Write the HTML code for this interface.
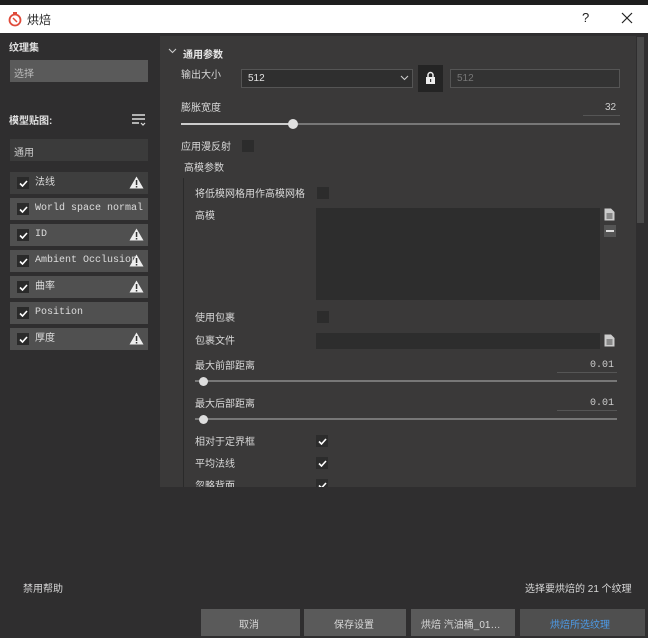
<!DOCTYPE html>
<html><head><meta charset="utf-8"><style>
*{margin:0;padding:0;box-sizing:border-box}
body{width:648px;height:638px;background:#2f2e2f;font-family:"Liberation Sans","Noto Sans CJK SC",sans-serif;font-size:10px;color:#d8d8d8;position:relative;overflow:hidden}
.a{position:absolute}
.t{position:absolute;white-space:nowrap}
.item{position:absolute;left:10px;width:138px;height:22px;background:#505050}
.item .cb{position:absolute;left:7px;top:5px;width:12px;height:12px;background:#2a2a2a}
.item .lbl{position:absolute;left:25px;top:0;line-height:22px;font-size:10px;color:#ddd}
.mono{font-family:"Liberation Mono","Noto Sans CJK SC",monospace}
.warn{position:absolute;right:4px;top:4px}
.box{position:absolute;width:12px;height:12px;background:#2c2c2c}
.ck{position:absolute;width:12px;height:12px;background:#2c2c2c}
</style></head><body>
<div class="a" style="left:0;top:0;width:648px;height:5px;background:#1e1e1e"></div>
<div class="a" style="left:0;top:5px;width:648px;height:28px;background:#fff"></div>
<svg class="a" style="left:7px;top:11px" width="16" height="16" viewBox="0 0 16 16"><circle cx="8" cy="9" r="5.5" fill="none" stroke="#e04a3a" stroke-width="1.8"/><rect x="6" y="1" width="4" height="2" fill="#e04a3a"/><path d="M6 7l4 4" stroke="#e04a3a" stroke-width="1.5"/></svg>
<div class="t" style="left:27px;top:11px;font-size:12px;color:#222">烘焙</div>
<div class="t" style="left:582px;top:10px;font-size:13px;color:#222">?</div>
<svg class="a" style="left:621px;top:12px" width="12" height="12"><path d="M1 1L11 11M11 1L1 11" stroke="#222" stroke-width="1.2"/></svg>

<div class="t" style="left:9px;top:39px;font-weight:bold;color:#e0e0e0">纹理集</div>
<div class="a" style="left:10px;top:60px;width:138px;height:22px;background:#5a5a5a"></div>
<div class="t" style="left:14px;top:65px;color:#bbb">选择</div>
<div class="t" style="left:9px;top:112px;font-weight:bold;color:#e0e0e0">模型贴图:</div>
<svg class="a" style="left:131px;top:113px" width="16" height="14"><path d="M1 2h13M1 6h13M1 10h7" stroke="#ddd" stroke-width="1.5"/><path d="M10 10l2 2 2-2" stroke="#ddd" stroke-width="1.2" fill="none"/></svg>
<div class="a" style="left:10px;top:139px;width:138px;height:22px;background:#3b3b3b"></div>
<div class="t" style="left:14px;top:144px;color:#ccc">通用</div>

<div class="item" style="top:172px;background:#3e3e3e"><div class="cb"></div><svg class="a" style="left:9px;top:8px" width="9" height="7"><path d="M1 3.5l2.5 2.5 4.5-5" stroke="#fff" stroke-width="1.6" fill="none"/></svg><div class="lbl">法线</div><svg class="warn" width="15" height="13"><path d="M7.5 0.5L14.5 12.5H0.5Z" fill="#eee"/><rect x="6.8" y="4" width="1.5" height="5" fill="#333"/><rect x="6.8" y="10" width="1.5" height="1.5" fill="#333"/></svg></div>
<div class="item" style="top:198px"><div class="cb"></div><svg class="a" style="left:9px;top:8px" width="9" height="7"><path d="M1 3.5l2.5 2.5 4.5-5" stroke="#fff" stroke-width="1.6" fill="none"/></svg><div class="lbl mono">World space normal</div></div>
<div class="item" style="top:224px"><div class="cb"></div><svg class="a" style="left:9px;top:8px" width="9" height="7"><path d="M1 3.5l2.5 2.5 4.5-5" stroke="#fff" stroke-width="1.6" fill="none"/></svg><div class="lbl mono">ID</div><svg class="warn" width="15" height="13"><path d="M7.5 0.5L14.5 12.5H0.5Z" fill="#eee"/><rect x="6.8" y="4" width="1.5" height="5" fill="#333"/><rect x="6.8" y="10" width="1.5" height="1.5" fill="#333"/></svg></div>
<div class="item" style="top:250px"><div class="cb"></div><svg class="a" style="left:9px;top:8px" width="9" height="7"><path d="M1 3.5l2.5 2.5 4.5-5" stroke="#fff" stroke-width="1.6" fill="none"/></svg><div class="lbl mono">Ambient Occlusion</div><svg class="warn" width="15" height="13"><path d="M7.5 0.5L14.5 12.5H0.5Z" fill="#eee"/><rect x="6.8" y="4" width="1.5" height="5" fill="#333"/><rect x="6.8" y="10" width="1.5" height="1.5" fill="#333"/></svg></div>
<div class="item" style="top:276px"><div class="cb"></div><svg class="a" style="left:9px;top:8px" width="9" height="7"><path d="M1 3.5l2.5 2.5 4.5-5" stroke="#fff" stroke-width="1.6" fill="none"/></svg><div class="lbl">曲率</div><svg class="warn" width="15" height="13"><path d="M7.5 0.5L14.5 12.5H0.5Z" fill="#eee"/><rect x="6.8" y="4" width="1.5" height="5" fill="#333"/><rect x="6.8" y="10" width="1.5" height="1.5" fill="#333"/></svg></div>
<div class="item" style="top:302px"><div class="cb"></div><svg class="a" style="left:9px;top:8px" width="9" height="7"><path d="M1 3.5l2.5 2.5 4.5-5" stroke="#fff" stroke-width="1.6" fill="none"/></svg><div class="lbl mono">Position</div></div>
<div class="item" style="top:328px"><div class="cb"></div><svg class="a" style="left:9px;top:8px" width="9" height="7"><path d="M1 3.5l2.5 2.5 4.5-5" stroke="#fff" stroke-width="1.6" fill="none"/></svg><div class="lbl">厚度</div><svg class="warn" width="15" height="13"><path d="M7.5 0.5L14.5 12.5H0.5Z" fill="#eee"/><rect x="6.8" y="4" width="1.5" height="5" fill="#333"/><rect x="6.8" y="10" width="1.5" height="1.5" fill="#333"/></svg></div>

<div class="a" style="left:160px;top:36px;width:476px;height:451px;background:#3a3939"></div>
<div class="a" style="left:637px;top:37px;width:7px;height:186px;background:#4a4a4a"></div>
<svg class="a" style="left:168px;top:48px" width="9" height="6"><path d="M1 1l3.5 3.5L8 1" stroke="#ccc" stroke-width="1.1" fill="none"/></svg>
<div class="t" style="left:183px;top:46px;font-weight:bold;color:#e8e8e8">通用参数</div>
<div class="t" style="left:181px;top:66px">输出大小</div>
<div class="a" style="left:241px;top:69px;width:172px;height:19px;background:#2f2f2f;border:1px solid #555"></div>
<div class="t" style="left:248px;top:73px;color:#e0e0e0">512</div>
<svg class="a" style="left:400px;top:75px" width="9" height="6"><path d="M1 1l3.5 3.5L8 1" stroke="#ccc" stroke-width="1.1" fill="none"/></svg>
<div class="a" style="left:418px;top:65px;width:25px;height:27px;background:#242424"></div>
<svg class="a" style="left:425px;top:71px" width="11" height="14"><path d="M3 6V4a2.5 2.5 0 0 1 5 0v2" stroke="#eee" stroke-width="1.5" fill="none"/><rect x="1" y="6" width="9" height="7" fill="#eee"/><rect x="5" y="8" width="1.2" height="3" fill="#333"/></svg>
<div class="a" style="left:450px;top:69px;width:170px;height:19px;background:#333;border:1px solid #555"></div>
<div class="t" style="left:457px;top:73px;color:#777">512</div>
<div class="t" style="left:181px;top:99px">膨胀宽度</div>
<div class="t" style="left:605px;top:102px;color:#ccc">32</div>
<div class="a" style="left:583px;top:115px;width:37px;height:1px;background:#555"></div>
<div class="a" style="left:181px;top:123px;width:112px;height:2px;background:#ccc"></div>
<div class="a" style="left:293px;top:123px;width:327px;height:2px;background:#777"></div>
<div class="a" style="left:288px;top:119px;width:10px;height:10px;border-radius:50%;background:#e0e0e0"></div>
<div class="t" style="left:181px;top:138px">应用漫反射</div>
<div class="box" style="left:242px;top:140px"></div>
<div class="t" style="left:184px;top:159px">高模参数</div>
<div class="a" style="left:183px;top:178px;width:1px;height:309px;background:#2a2a2a"></div>
<div class="t" style="left:195px;top:185px">将低模网格用作高模网格</div>
<div class="box" style="left:317px;top:187px"></div>
<div class="t" style="left:195px;top:207px">高模</div>
<div class="a" style="left:316px;top:208px;width:284px;height:92px;background:#2d2d2d"></div>
<svg class="a" style="left:604px;top:208px" width="11" height="13"><path d="M0.5 0.5h6.5l3.5 3.5v8.5h-10z" fill="#ccc"/><path d="M2.5 6h6M2.5 8h6M2.5 10h6" stroke="#444" stroke-width="1"/></svg>
<div class="a" style="left:604px;top:225px;width:12px;height:12px;background:#555"></div>
<div class="a" style="left:606px;top:230px;width:8px;height:2px;background:#ddd"></div>
<div class="t" style="left:195px;top:309px">使用包裹</div>
<div class="box" style="left:317px;top:311px"></div>
<div class="t" style="left:195px;top:332px">包裹文件</div>
<div class="a" style="left:316px;top:333px;width:284px;height:16px;background:#2d2d2d"></div>
<svg class="a" style="left:604px;top:334px" width="11" height="13"><path d="M0.5 0.5h6.5l3.5 3.5v8.5h-10z" fill="#ccc"/><path d="M2.5 6h6M2.5 8h6M2.5 10h6" stroke="#444" stroke-width="1"/></svg>
<div class="t" style="left:195px;top:357px">最大前部距离</div>
<div class="t mono" style="left:590px;top:360px;color:#ccc">0.01</div>
<div class="a" style="left:557px;top:372px;width:60px;height:1px;background:#555"></div>
<div class="a" style="left:195px;top:380px;width:422px;height:2px;background:#777"></div>
<div class="a" style="left:199px;top:377px;width:9px;height:9px;border-radius:50%;background:#ddd"></div>
<div class="t" style="left:195px;top:395px">最大后部距离</div>
<div class="t mono" style="left:590px;top:398px;color:#ccc">0.01</div>
<div class="a" style="left:557px;top:410px;width:60px;height:1px;background:#555"></div>
<div class="a" style="left:195px;top:418px;width:422px;height:2px;background:#777"></div>
<div class="a" style="left:199px;top:415px;width:9px;height:9px;border-radius:50%;background:#ddd"></div>
<div class="t" style="left:195px;top:433px">相对于定界框</div>
<div class="ck" style="left:316px;top:435px"></div><svg class="a" style="left:318px;top:438px" width="9" height="7"><path d="M1 3.5l2.5 2.5 4.5-5" stroke="#fff" stroke-width="1.6" fill="none"/></svg>
<div class="t" style="left:195px;top:455px">平均法线</div>
<div class="ck" style="left:316px;top:457px"></div><svg class="a" style="left:318px;top:460px" width="9" height="7"><path d="M1 3.5l2.5 2.5 4.5-5" stroke="#fff" stroke-width="1.6" fill="none"/></svg>
<div class="a" style="left:160px;top:477px;width:476px;height:10px;overflow:hidden"><div class="t" style="left:35px;top:0px">忽略背面</div><div class="ck" style="left:156px;top:2px"></div><svg class="a" style="left:158px;top:5px" width="9" height="7"><path d="M1 3.5l2.5 2.5 4.5-5" stroke="#fff" stroke-width="1.6" fill="none"/></svg></div>

<div class="t" style="left:23px;top:580px">禁用帮助</div>
<div class="t" style="left:525px;top:580px">选择要烘焙的 21 个纹理</div>
<div class="a" style="left:201px;top:609px;width:99px;height:27px;background:#5a5a5a"></div>
<div class="t" style="left:239px;top:616px">取消</div>
<div class="a" style="left:304px;top:609px;width:102px;height:27px;background:#5a5a5a"></div>
<div class="t" style="left:334px;top:616px">保存设置</div>
<div class="a" style="left:411px;top:609px;width:104px;height:27px;background:#5a5a5a"></div>
<div class="t" style="left:421px;top:616px">烘焙 汽油桶_01…</div>
<div class="a" style="left:520px;top:609px;width:125px;height:27px;background:#4f4f4f"></div>
<div class="t" style="left:550px;top:616px;color:#4d9be8">烘焙所选纹理</div>
</body></html>
